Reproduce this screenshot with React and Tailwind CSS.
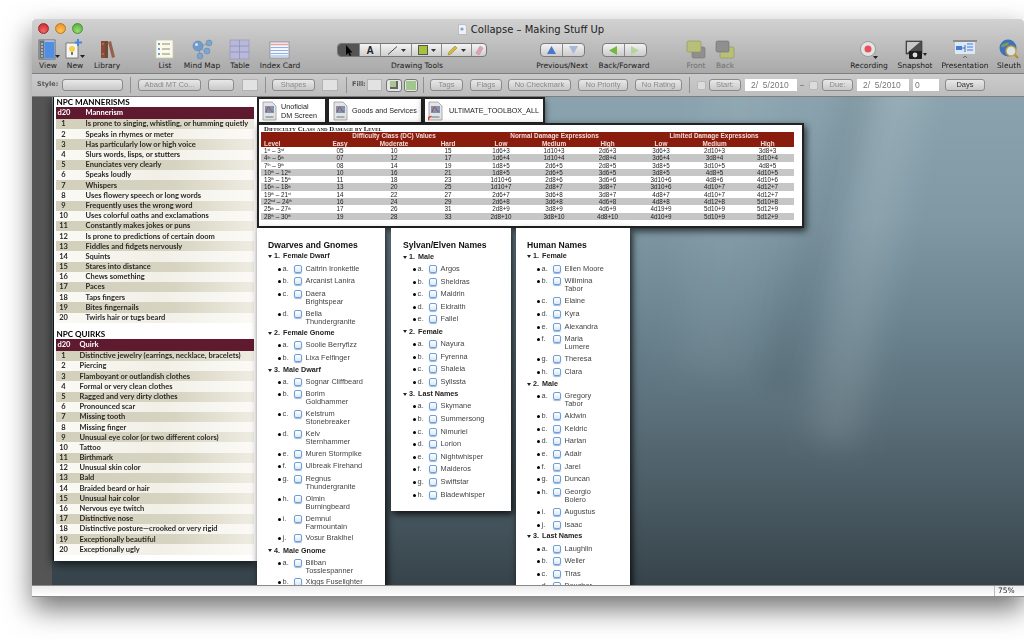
import React from 'react';

const mannerisms = [
  'Is prone to singing, whistling, or humming quietly', 'Speaks in rhymes or meter', 'Has particularly low or high voice',
  'Slurs words, lisps, or stutters', 'Enunciates very clearly', 'Speaks loudly', 'Whispers', 'Uses flowery speech or long words',
  'Frequently uses the wrong word', 'Uses colorful oaths and exclamations', 'Constantly makes jokes or puns',
  'Is prone to predictions of certain doom', 'Fiddles and fidgets nervously', 'Squints', 'Stares into distance', 'Chews something',
  'Paces', 'Taps fingers', 'Bites fingernails', 'Twirls hair or tugs beard',
];

const quirks = [
  'Distinctive jewelry (earrings, necklace, bracelets)', 'Piercing', 'Flamboyant or outlandish clothes', 'Formal or very clean clothes',
  'Ragged and very dirty clothes', 'Pronounced scar', 'Missing tooth', 'Missing finger', 'Unusual eye color (or two different colors)',
  'Tattoo', 'Birthmark', 'Unusual skin color', 'Bald', 'Braided beard or hair', 'Unusual hair color', 'Nervous eye twitch',
  'Distinctive nose', 'Distinctive posture—crooked or very rigid', 'Exceptionally beautiful', 'Exceptionally ugly',
];

const damage = [
  ['1', 'st', '3', 'rd', '05', '10', '15', '1d6+3', '1d10+3', '2d6+3', '3d6+3', '2d10+3', '3d8+3'],
  ['4', 'th', '6', 'th', '07', '12', '17', '1d6+4', '1d10+4', '2d8+4', '3d6+4', '3d8+4', '3d10+4'],
  ['7', 'th', '9', 'th', '08', '14', '19', '1d8+5', '2d6+5', '2d8+5', '3d8+5', '3d10+5', '4d8+5'],
  ['10', 'th', '12', 'th', '10', '16', '21', '1d8+5', '2d6+5', '3d6+5', '3d8+5', '4d8+5', '4d10+5'],
  ['13', 'th', '15', 'th', '11', '18', '23', '1d10+6', '2d8+6', '3d6+6', '3d10+6', '4d8+6', '4d10+6'],
  ['16', 'th', '18', 'th', '13', '20', '25', '1d10+7', '2d8+7', '3d8+7', '3d10+6', '4d10+7', '4d12+7'],
  ['19', 'th', '21', 'st', '14', '22', '27', '2d6+7', '3d6+8', '3d8+7', '4d8+7', '4d10+7', '4d12+7'],
  ['22', 'nd', '24', 'th', '16', '24', '29', '2d6+8', '3d6+8', '4d6+8', '4d8+8', '4d12+8', '5d10+8'],
  ['25', 'th', '27', 'th', '17', '26', '31', '2d8+9', '3d8+9', '4d6+9', '4d19+9', '5d10+9', '5d12+9'],
  ['28', 'th', '30', 'th', '19', '28', '33', '2d8+10', '3d8+10', '4d8+10', '4d10+9', '5d10+9', '5d12+9'],
];

const dwarves = [
  ['Female Dwarf', ['Caitrin Ironkettle', 'Arcanist Lanira', 'Daera|Brightspear', 'Bella|Thundergranite']],
  ['Female Gnome', ['Soolie Berryfizz', 'Lixa Felfinger']],
  ['Male Dwarf', ['Sognar Cliffbeard', 'Borim|Goldhammer', 'Kelstrum|Stonebreaker', 'Kelv|Sternhammer', 'Muren Stormpike', 'Ulbreak Firehand', 'Regnus|Thundergranite', 'Olmin|Burningbeard', 'Demnul|Farmountain', 'Vosur Braklhel']],
  ['Male Gnome', ['Bilban|Tosslespanner', 'Xiggs Fuselighter']],
];

const sylvan = [
  ['Male', ['Argos', 'Sheldras', 'Maldrin', 'Eldraith', 'Fallel']],
  ['Female', ['Nayura', 'Fyrenna', 'Shaleia', 'Syllssta']],
  ['Last Names', ['Skymane', 'Summersong', 'Nimuriel', 'Lorion', 'Nightwhisper', 'Maideros', 'Swiftstar', 'Bladewhisper']],
];

const human = [
  ['Female', ['Ellen Moore', 'Wilimina|Tabor', 'Elaine', 'Kyra', 'Alexandra', 'Maria|Lumere', 'Theresa', 'Clara']],
  ['Male', ['Gregory|Tabor', 'Aldwin', 'Keldric', 'Harlan', 'Adair', 'Jarel', 'Duncan', 'Georgio|Bolero', 'Augustus', 'Isaac']],
  ['Last Names', ['Laughlin', 'Weller', 'Tiras', 'Boucher']],
];

const ViewIcon = () => (
  <svg width="24" height="22" viewBox="0 0 24 22">
    <rect x="3" y="1" width="16" height="19" fill="#e8eef6" stroke="#555" strokeWidth="0.8" />
    <rect x="3.5" y="1.5" width="5" height="18" fill="#6b7178" />
    <rect x="8.5" y="2.5" width="10" height="17" fill="#4f8ee0" />
    <path d="M5 5h2M5 8h2M5 11h2M5 14h2M5 17h2" stroke="#e8e8e8" strokeWidth="1" />
    <path d="M19 16h5l-2.5 3z" fill="#222" />
  </svg>
);

const NewIcon = () => (
  <svg width="24" height="22" viewBox="0 0 24 22">
    <path d="M3 4h12v15H3z" fill="#f5f5f5" stroke="#666" strokeWidth="0.8" />
    <circle cx="9" cy="10" r="3" fill="#f2d24a" />
    <rect x="8" y="13" width="2" height="3" fill="#777" />
    <path d="M15 0v7M12 3.5h7" stroke="#3f8ae0" strokeWidth="2" />
    <path d="M17 16h5l-2.5 3z" fill="#222" />
  </svg>
);

const LibraryIcon = () => (
  <svg width="24" height="22" viewBox="0 0 24 22">
    <path d="M6 2h4v17H6z" fill="#8c4a38" />
    <path d="M10 2h3v17h-3z" fill="#6d4a3a" />
    <path d="M13 3l3-1 4 16-3 1z" fill="#96604a" />
    <path d="M7 5h2M7 15h2" stroke="#c9a27e" strokeWidth="0.8" />
  </svg>
);

const ListIcon = () => (
  <svg width="24" height="22" viewBox="0 0 24 22">
    <rect x="3" y="1" width="17" height="18" fill="#fafae8" stroke="#c8c8b0" strokeWidth="0.8" />
    <path d="M9 5h8M9 10h8M9 15h8" stroke="#888" strokeWidth="1" />
    <circle cx="6" cy="5" r="1" fill="#3a7fd8" />
    <circle cx="6" cy="10" r="1" fill="#3a7fd8" />
    <circle cx="6" cy="15" r="1" fill="#3a7fd8" />
  </svg>
);

const MindMapIcon = () => (
  <svg width="24" height="22" viewBox="0 0 24 22">
    <path d="M9 8L19 4M9 8l9 6M9 8l1 11" stroke="#8a9ab0" strokeWidth="1" />
    <circle cx="8" cy="7" r="5" fill="#6f9ccc" stroke="#5a7fa8" strokeWidth="0.5" />
    <circle cx="19" cy="4" r="3" fill="#7ba6d2" stroke="#5a7fa8" strokeWidth="0.5" />
    <circle cx="17" cy="12" r="3" fill="#7ba6d2" stroke="#5a7fa8" strokeWidth="0.5" />
    <circle cx="10" cy="17" r="3" fill="#7ba6d2" stroke="#5a7fa8" strokeWidth="0.5" />
    <circle cx="6.5" cy="5.5" r="1.5" fill="#d5e4f2" />
  </svg>
);

const TableIcon = () => (
  <svg width="24" height="22" viewBox="0 0 24 22">
    <rect x="2" y="1" width="19" height="19" fill="#b8b8da" stroke="#9c9cc4" strokeWidth="0.8" />
    <path d="M11.5 1v19M2 7h19M2 13h19" stroke="#9090bc" strokeWidth="0.8" />
  </svg>
);

const CardIcon = () => (
  <svg width="24" height="22" viewBox="0 0 24 22">
    <rect x="2" y="3" width="19" height="16" fill="#f6f6fa" stroke="#8c8c96" strokeWidth="0.8" />
    <path d="M2.5 5.5h18" stroke="#f0a0a0" strokeWidth="1.5" />
    <path d="M2.5 8.5h18M2.5 11.5h18M2.5 14.5h18M2.5 17h18" stroke="#8ab4ea" strokeWidth="1" />
  </svg>
);

const FrontIcon = () => (
  <svg width="22" height="22" viewBox="0 0 22 22">
    <rect x="7" y="8" width="13" height="11" rx="1.5" fill="#8f8f8f" stroke="#777" strokeWidth="0.6" />
    <rect x="2" y="2" width="14" height="11" rx="1.5" fill="#b8bf78" stroke="#8e9358" strokeWidth="0.6" />
  </svg>
);

const BackIcon = () => (
  <svg width="22" height="22" viewBox="0 0 22 22">
    <rect x="6" y="8" width="14" height="11" rx="1.5" fill="#b8bf78" stroke="#8e9358" strokeWidth="0.6" />
    <rect x="2" y="2" width="13" height="11" rx="1.5" fill="#8f8f8f" stroke="#707070" strokeWidth="0.6" />
  </svg>
);

const RecordIcon = () => (
  <svg width="26" height="22" viewBox="0 0 26 22">
    <circle cx="12" cy="10" r="7.5" fill="#e4e4e4" stroke="#8e8e8e" strokeWidth="0.8" />
    <circle cx="12" cy="10" r="3.5" fill="#e8505c" />
    <path d="M17 17h5l-2.5 3z" fill="#222" />
  </svg>
);

const SnapshotIcon = () => (
  <svg width="26" height="22" viewBox="0 0 26 22">
    <rect x="4" y="2" width="16" height="13" fill="#4e4e4e" stroke="#333" strokeWidth="0.6" />
    <path d="M5 14L18 3H5z" fill="#c8c8c8" />
    <rect x="7" y="12" width="13" height="8" rx="1" fill="#1e1e1e" />
    <circle cx="13" cy="16" r="2.4" fill="#ddd" />
    <path d="M21 14h4l-2 3z" fill="#222" />
  </svg>
);

const PresentationIcon = () => (
  <svg width="28" height="22" viewBox="0 0 28 22">
    <rect x="2" y="1" width="24" height="2" fill="#8d8d8d" />
    <rect x="4" y="3" width="20" height="12" fill="#dce8f8" />
    <rect x="5" y="7" width="6" height="4" fill="#3f7fd8" />
    <path d="M11 9h3M14 6v7" stroke="#4a6fa8" strokeWidth="1" />
    <path d="M16 5h6M16 8h6M16 11h6" stroke="#3f7fd8" strokeWidth="1" />
    <path d="M12 19l2-2 2 2" fill="none" stroke="#555" strokeWidth="0.8" />
  </svg>
);

const SleuthIcon = () => (
  <svg width="24" height="22" viewBox="0 0 24 22">
    <circle cx="11" cy="9" r="8.5" fill="#3f72b8" />
    <path d="M4 7c3-4 6-2 7-4 2 1 0 4-2 4s-3 3-5 0z" fill="#7e9c58" />
    <circle cx="14" cy="12" r="5" fill="#d8e4ea" stroke="#c9a23e" strokeWidth="1.4" />
    <path d="M18 16l3 3" stroke="#b88a28" strokeWidth="2" />
  </svg>
);

const PdfIcon = ({ alias }) => (
  <svg width="15" height="20" viewBox="0 0 15 20" className="shrink-0">
    <path d="M1 1h9l4 4v14H1z" fill="#e4e4e4" stroke="#9a9a9a" strokeWidth="0.8" />
    <rect x="3" y="5" width="9" height="7" fill="#7c93b8" />
    <path d="M4 11c2-6 3-6 4-3s2 2 3 3" stroke="#b34a3a" fill="none" strokeWidth="1" />
    <path d="M3.5 16h8" stroke="#9a9a9a" strokeWidth="1.5" />
    {alias && <path d="M0 19.5c0-3 1-4 3.5-4" stroke="#d83a2e" fill="none" strokeWidth="1.6" />}
  </svg>
);

const SegDivider = () => <div className="w-px self-stretch bg-[#8a8a8a]" />;

const DrawingTools = () => (
  <div className="flex h-[14px] w-[150px] rounded-[4px] border border-[#777] bg-gradient-to-b from-[#f4f4f4] to-[#cfcfcf] overflow-hidden">
    <div className="w-[21px] flex items-center justify-center bg-[#555]">
      <svg width="8" height="11" viewBox="0 0 8 11"><path d="M1 0v10l2.2-2 1.6 3 1.5-.8-1.6-2.8H7.5z" fill="#000" /></svg>
    </div>
    <SegDivider />
    <div className="w-[20px] flex items-center justify-center text-[10px] font-bold text-[#222] font-['Liberation_Sans',sans-serif]">A</div>
    <SegDivider />
    <div className="w-[30px] flex items-center justify-center gap-[3px]">
      <svg width="11" height="9" viewBox="0 0 11 9"><path d="M1 8.5L10 .5" stroke="#222" strokeWidth="0.8" /></svg>
      <svg width="5" height="3" viewBox="0 0 5 3"><path d="M0 0h5L2.5 3z" fill="#333" /></svg>
    </div>
    <SegDivider />
    <div className="w-[29px] flex items-center justify-center gap-[3px]">
      <div className="w-[10px] h-[10px] bg-[#a6c23a] border border-[#555]" />
      <svg width="5" height="3" viewBox="0 0 5 3"><path d="M0 0h5L2.5 3z" fill="#333" /></svg>
    </div>
    <SegDivider />
    <div className="w-[29px] flex items-center justify-center gap-[3px]">
      <svg width="11" height="11" viewBox="0 0 11 11"><path d="M1 10l1-3 6-6 2 2-6 6z" fill="#d8b93a" stroke="#8a7a2a" strokeWidth="0.5" /></svg>
      <svg width="5" height="3" viewBox="0 0 5 3"><path d="M0 0h5L2.5 3z" fill="#333" /></svg>
    </div>
    <SegDivider />
    <div className="flex-1 flex items-center justify-center">
      <svg width="10" height="11" viewBox="0 0 10 11"><path d="M2 8l4-7 3 2-4 7z" fill="#e8a0b0" stroke="#999" strokeWidth="0.5" /></svg>
    </div>
  </div>
);

const PairButton = ({ left, right }) => (
  <div className="flex h-[14px] w-[45px] rounded-[4px] border border-[#7c7c7c] bg-gradient-to-b from-[#f2f2f2] to-[#cccccc] overflow-hidden">
    <div className="flex-1 flex items-center justify-center">{left}</div>
    <SegDivider />
    <div className="flex-1 flex items-center justify-center">{right}</div>
  </div>
);

const ToolItem = ({ className, label, muted, children }) => (
  <div className={`flex flex-col items-center shrink-0 ${className}`}>
    <div className="h-[22px] flex items-center justify-center">{children}</div>
    <div className={`h-[10px] leading-[10px] text-[7.5px] whitespace-nowrap ${muted ? 'text-[#6f6f6f]' : 'text-[#1c1c1c]'}`}>{label}</div>
  </div>
);

const Toolbar = () => (
  <div className="flex pt-0">
    <ToolItem className="w-[28px] ml-[2px]" label="View"><ViewIcon /></ToolItem>
    <ToolItem className="w-[26px]" label="New"><NewIcon /></ToolItem>
    <ToolItem className="w-[38px]" label="Library"><LibraryIcon /></ToolItem>
    <ToolItem className="w-[30px] ml-[24px]" label="List"><ListIcon /></ToolItem>
    <ToolItem className="w-[42px] ml-[1px]" label="Mind Map"><MindMapIcon /></ToolItem>
    <ToolItem className="w-[30px] ml-[2px]" label="Table"><TableIcon /></ToolItem>
    <ToolItem className="w-[46px] ml-[2px]" label="Index Card"><CardIcon /></ToolItem>
    <div className="flex flex-col items-start shrink-0 w-[160px] ml-[34px]">
      <div className="h-[22px] flex items-center"><DrawingTools /></div>
      <div className="h-[10px] w-full text-center leading-[10px] text-[7.5px] text-[#1c1c1c]">Drawing Tools</div>
    </div>
    <ToolItem className="w-[56px] ml-[37px]" label="Previous/Next">
      <PairButton
        left={<svg width="9" height="8" viewBox="0 0 9 8"><path d="M4.5 0L9 8H0z" fill="#4a78c8" /></svg>}
        right={<svg width="9" height="8" viewBox="0 0 9 8"><path d="M4.5 8L9 0H0z" fill="#a8b8d8" /></svg>}
      />
    </ToolItem>
    <ToolItem className="w-[54px] ml-[7px]" label="Back/Forward">
      <PairButton
        left={<svg width="8" height="9" viewBox="0 0 8 9"><path d="M0 4.5L8 0v9z" fill="#74b83e" /></svg>}
        right={<svg width="8" height="9" viewBox="0 0 8 9"><path d="M8 4.5L0 0v9z" fill="#b8d49c" /></svg>}
      />
    </ToolItem>
    <ToolItem className="w-[24px] ml-[33px]" label="Front" muted><FrontIcon /></ToolItem>
    <ToolItem className="w-[24px] ml-[5px]" label="Back" muted><BackIcon /></ToolItem>
    <ToolItem className="w-[40px] ml-[112px]" label="Recording"><RecordIcon /></ToolItem>
    <ToolItem className="w-[38px] ml-[7px]" label="Snapshot"><SnapshotIcon /></ToolItem>
    <ToolItem className="w-[50px] ml-[6px]" label="Presentation"><PresentationIcon /></ToolItem>
    <ToolItem className="w-[28px] ml-[5px]" label="Sleuth"><SleuthIcon /></ToolItem>
  </div>
);

const Btn = ({ className, label, dark }) => (
  <div className={`h-[12px] shrink-0 flex items-center justify-center rounded-[3px] border border-[#8a8a8a] bg-gradient-to-b from-[#e8e8e8] to-[#c8c8c8] font-['Liberation_Sans',sans-serif] text-[7.5px] leading-none whitespace-nowrap ${dark ? 'text-[#333]' : 'text-[#8a8a8a]'} ${className}`}>
    {label}
  </div>
);

const Box = ({ className }) => <div className={`h-[12px] shrink-0 bg-[#e2e2e2] border border-[#b2b2b2] ${className}`} />;

const Divider = ({ className }) => <div className={`w-px h-[16px] shrink-0 bg-[#8f8f8f] ${className}`} />;

const DateField = ({ className, value }) => (
  <div className={`h-[12px] shrink-0 bg-white font-['Liberation_Sans',sans-serif] text-[8.5px] leading-[12px] text-[#777] whitespace-pre ${className}`}>{value}</div>
);

const StyleBar = () => (
  <div className="h-[24px] shrink-0 flex items-center border-t border-b border-[#7e7e7e] bg-gradient-to-b from-[#cbcbcb] to-[#bdbdbd]">
    <div className="ml-[5px] w-[19px] shrink-0 text-[6.5px] font-bold text-[#555]">Style:</div>
    <Btn className="ml-[6px] w-[61px]" label="" />
    <Divider className="ml-[7px]" />
    <Btn className="ml-[7px] w-[63px]" label="Abadi MT Co..." />
    <Btn className="ml-[7px] w-[26px]" label="" />
    <Box className="ml-[8px] w-[16px]" />
    <Divider className="ml-[7px]" />
    <Btn className="ml-[6px] w-[43px]" label="Shapes" />
    <Box className="ml-[7px] w-[16px]" />
    <Divider className="ml-[8px]" />
    <div className="ml-[5px] w-[13px] shrink-0 text-[6.5px] font-bold text-[#555]">Fill:</div>
    <Box className="ml-[2px] w-[15px]" />
    <div className="ml-[4px] w-[16px] h-[13px] shrink-0 rounded-[3px] border border-[#777] bg-[#e6e6e6] flex items-center justify-center">
      <div className="w-[8px] h-[8px] bg-[#a9c695] border-r-2 border-b-2 border-[#666]" />
    </div>
    <div className="ml-[2px] w-[14px] h-[13px] shrink-0 rounded-[3px] border border-[#777] bg-[#e6e6e6] flex items-center justify-center">
      <div className="w-[10px] h-[9px] bg-[#a2c78c]" />
    </div>
    <Divider className="ml-[5px]" />
    <Btn className="ml-[6px] w-[33px]" label="Tags" />
    <Btn className="ml-[7px] w-[32px]" label="Flags" />
    <Btn className="ml-[6px] w-[63px]" label="No Checkmark" />
    <Btn className="ml-[7px] w-[50px]" label="No Priority" />
    <Btn className="ml-[7px] w-[47px]" label="No Rating" />
    <Divider className="ml-[7px]" />
    <div className="ml-[7px] w-[9px] h-[9px] shrink-0 rounded-[2px] bg-[#dcdcdc] border border-[#b8b8b8]" />
    <Btn className="ml-[3px] w-[32px]" label="Start:" />
    <DateField className="ml-[4px] w-[52px] pl-[6px]" value="2/  5/2010" />
    <div className="ml-[3px] w-[4px] h-px shrink-0 bg-[#888]" />
    <div className="ml-[5px] w-[9px] h-[9px] shrink-0 rounded-[2px] bg-[#dcdcdc] border border-[#b8b8b8]" />
    <Btn className="ml-[4px] w-[31px]" label="Due:" />
    <DateField className="ml-[4px] w-[52px] pl-[6px]" value="2/  5/2010" />
    <DateField className="ml-[4px] w-[26px] pl-[2px] text-[#333]" value="0" />
    <Btn className="ml-[6px] w-[40px]" label="Days" dark />
  </div>
);

const NpcTable = ({ title, head, rows, textCol }) => (
  <div className="font-['Lato','Open_Sans',sans-serif] font-bold text-[#2b2926]">
    <div className="h-[10px] leading-[10px] text-[8.1px] text-black pl-[1px]">{title}</div>
    <div className="h-[12px] flex items-center bg-[#5f1a30] text-white text-[7.5px]">
      <div className={`pl-[2px] ${textCol}`}>d20</div>
      <div>{head}</div>
    </div>
    {rows.map((r, i) => (
      <div
        key={r}
        className={`h-[10.2px] flex items-center text-[7.5px] whitespace-nowrap ${i % 2 === 0 ? 'bg-[linear-gradient(to_right,#d2cfbb,#d6d3c1_60%,#efede2)]' : 'bg-[linear-gradient(to_right,#fbfaf6,#f1efe6_50%,#fbfaf6)]'}`}
      >
        <div className={textCol}>
          <div className="w-[16px] text-center">{i + 1}</div>
        </div>
        <div>{r}</div>
      </div>
    ))}
  </div>
);

const colClasses = ['pl-[3px] text-left', 'text-center', 'text-center', 'text-center', 'text-center', 'text-center', 'text-center', 'text-center', 'text-center', 'text-center'];
const gridCols = 'grid grid-cols-[52px_54px_54px_54px_52px_54px_53px_54px_53px_53px]';

const DamageTable = () => (
  <div className="absolute left-[225px] top-[26px] w-[547px] h-[105px] bg-white border-2 border-[#222] shadow-[2px_3px_7px_rgba(0,0,0,0.7)] pl-[2px] pt-[1px] font-['Liberation_Sans',sans-serif]">
    <div className="h-[6px] leading-[6px] text-[6.8px] font-bold text-[#222] [font-variant:small-caps] pl-[3px] font-['Liberation_Serif',serif] whitespace-nowrap">Difficulty Class and Damage by Level</div>
    <div className="w-[533px] bg-[#8a1c0e] text-[#f3dcd6] text-[6.4px] font-bold leading-[7.5px]">
      <div className={gridCols}>
        <div />
        <div className="col-span-3 text-center">Difficulty Class (DC) Values</div>
        <div className="col-span-3 text-center">Normal Damage Expressions</div>
        <div className="col-span-3 text-center">Limited Damage Expressions</div>
      </div>
      <div className={gridCols}>
        {['Level', 'Easy', 'Moderate', 'Hard', 'Low', 'Medium', 'High', 'Low', 'Medium', 'High'].map((h, i) => (
          <div key={i} className={colClasses[i]}>{h}</div>
        ))}
      </div>
    </div>
    <div className="w-[533px] text-[6.3px] text-[#222] leading-[7.3px]">
      {damage.map((r, i) => (
        <div key={i} className={`${gridCols} ${i % 2 === 1 ? 'bg-[#c6c6c6]' : 'bg-white'}`}>
          <div className="pl-[3px] whitespace-nowrap">
            {r[0]}<sup className="text-[3.5px]">{r[1]}</sup> – {r[2]}<sup className="text-[3.5px]">{r[3]}</sup>
          </div>
          {r.slice(4).map((c, j) => <div key={j} className="text-center">{c}</div>)}
        </div>
      ))}
    </div>
  </div>
);

const Tab = ({ className, label, alias }) => (
  <div className={`h-[27px] shrink-0 bg-white border-2 border-[#222] flex items-center text-[7.2px] leading-[9px] text-[#222] font-['Liberation_Sans',sans-serif] ${className}`}>
    <PdfIcon alias={alias} />
    <div>{label}</div>
  </div>
);

const Outline = ({ className, title, groups, treeClass, itemClass, headClass, padClass }) => (
  <div className={`absolute top-[131px] bg-white shadow-[2px_3px_7px_rgba(0,0,0,0.85)] overflow-hidden font-['Liberation_Sans',sans-serif] ${className}`}>
    <div className={`pt-[12px] h-[23px] leading-[10px] text-[8.6px] font-bold text-[#111] whitespace-nowrap ${treeClass}`}>{title}</div>
    {groups.map(([name, items], gi) => (
      <div key={name}>
        <div className={`flex items-center text-[7.2px] font-bold text-[#222] whitespace-nowrap ${headClass} ${treeClass}`}>
          <svg width="4" height="3" viewBox="0 0 4 3" className="shrink-0"><path d="M0 0h4L2 3z" fill="#222" /></svg>
          <span className="ml-[2px] w-[9px]">{gi + 1}.</span>
          <span>{name}</span>
        </div>
        {items.map((it, i) => {
          const lines = it.split('|');
          return (
            <div key={it} className={`flex items-start min-h-[12.6px] text-[7.4px] leading-[8px] text-[#444] ${padClass} ${itemClass}`}>
              <div className="w-[3px] h-[3px] mt-[3px] rounded-full bg-black shrink-0" />
              <div className="ml-[1.5px] w-[11px] shrink-0">{'abcdefghij'[i]}.</div>
              <div className="w-[8px] h-[8px] shrink-0 rounded-[2px] border border-[#6a9fd8] bg-gradient-to-b from-white to-[#dbe8f6] shadow-[0_1px_1px_rgba(60,110,170,0.5)]" />
              <div className="ml-[4px] whitespace-nowrap">
                {lines.map((l) => <div key={l}>{l}</div>)}
              </div>
            </div>
          );
        })}
      </div>
    ))}
  </div>
);

const Canvas = () => (
  <div className="relative flex-1 overflow-hidden bg-[linear-gradient(to_bottom,#8aa3ae_0%,#7f98a4_25%,#6c8591_45%,#5a6f7a_65%,#47575f_85%,#36434a_100%)]">
    <div className="absolute left-[813px] -top-[50px] w-[50px] h-[400px] bg-white/10 blur-[14px] rotate-[11deg]" />
    <div className="absolute left-[770px] -top-[50px] w-[40px] h-[350px] bg-black/5 blur-[10px] rotate-[15deg]" />
    <div className="absolute left-[660px] -top-[40px] w-[70px] h-[320px] bg-white/5 blur-[16px] rotate-[6deg]" />
    <div className="absolute left-0 top-0 bottom-0 w-[20px] bg-[#555555]" />
    <div className="absolute left-[21px] top-0 w-[204px] h-[464px] bg-white shadow-[0_3px_10px_rgba(0,0,0,0.75)] border-l border-[#111] pl-[1.5px] pr-[3.5px] flex flex-col">
      <NpcTable title="NPC MANNERISMS" head="Mannerism" rows={mannerisms} textCol="w-[30px] shrink-0" />
      <div className="mt-[6px]">
        <NpcTable title="NPC QUIRKS" head="Quirk" rows={quirks} textCol="w-[24px] shrink-0" />
      </div>
    </div>
    <div className="absolute left-[225px] top-0 flex">
      <Tab className="w-[70px] pl-[3px] gap-[4px]" label={<>Unoficial<br />DM Screen</>} />
      <Tab className="w-[96px] pl-[4px] gap-[4px]" label="Goods and Services" />
      <Tab className="w-[122px] pl-[3px] gap-[6px] shadow-[0_3px_6px_rgba(0,0,0,0.6)]" label="ULTIMATE_TOOLBOX_ALL" alias />
    </div>
    <DamageTable />
    <Outline className="left-[225px] w-[128px] h-[400px]" title="Dwarves and Gnomes" groups={dwarves} treeClass="pl-[11px]" itemClass="pl-[21px]" headClass="h-[11.7px]" padClass="py-[1.9px]" />
    <Outline className="left-[359px] w-[120px] h-[283px]" title="Sylvan/Elven Names" groups={sylvan} treeClass="pl-[12px]" itemClass="pl-[22px]" headClass="h-[12px]" padClass="py-[2.1px]" />
    <Outline className="left-[484px] w-[114px] h-[400px]" title="Human Names" groups={human} treeClass="pl-[11px]" itemClass="pl-[21px]" headClass="h-[11.5px]" padClass="py-[2.1px]" />
  </div>
);

export default function App() {
  return (
    <div className="w-[1024px] h-[640px] bg-white overflow-hidden pt-[19px] pl-[32px] font-['DejaVu_Sans','Liberation_Sans',sans-serif]">
      <div className="w-[992px] h-[578px] flex flex-col shadow-[0_12px_26px_rgba(0,0,0,0.55)] blur-[0.4px]">
        <div className="h-[54px] shrink-0 rounded-t-[4px] bg-gradient-to-b from-[#d2d2d2] to-[#a9a9a9]">
          <div className="h-[20px] relative flex items-center justify-center">
            <div className="absolute left-[6px] top-[4px] flex gap-[6px]">
              <div className="w-[11px] h-[11px] rounded-full border border-[#a0282e] bg-[radial-gradient(circle_at_50%_75%,#f06a6a,#c8202a)]" />
              <div className="w-[11px] h-[11px] rounded-full border border-[#b87a20] bg-[radial-gradient(circle_at_50%_75%,#ffc45a,#e88a1e)]" />
              <div className="w-[11px] h-[11px] rounded-full border border-[#4e8e38] bg-[radial-gradient(circle_at_50%_75%,#9ade70,#4fa83c)]" />
            </div>
            <div className="flex items-center gap-[4px] text-[10px] text-[#222] whitespace-nowrap pl-[6px]">
              <svg width="9" height="11" viewBox="0 0 9 11"><path d="M.5.5h6l2 2v8h-8z" fill="#eef2f6" stroke="#aaa" strokeWidth="0.6" /><circle cx="4" cy="5" r="1.6" fill="#7fa3c8" /></svg>
              <span>Collapse – Making Stuff Up</span>
            </div>
          </div>
          <Toolbar />
        </div>
        <StyleBar />
        <Canvas />
        <div className="h-[12px] shrink-0 flex border-t border-[#8a8a8a] border-b bg-gradient-to-b from-[#ececec] to-white">
          <div className="flex-1" />
          <div className="w-[30px] border-l border-[#bbb] pl-[3px] text-[7.5px] leading-[10px] text-[#222]">75%</div>
        </div>
      </div>
    </div>
  );
}
